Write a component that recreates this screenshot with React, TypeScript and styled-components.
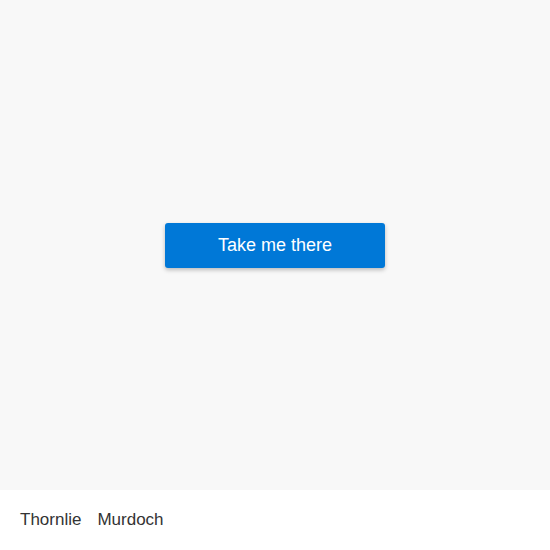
import React from 'react';
import styled, { createGlobalStyle } from 'styled-components';

const GlobalStyle = createGlobalStyle`
  html, body {
    margin: 0;
    padding: 0;
    height: 100%;
  }
  body {
    font-family: 'Liberation Sans', Arial, sans-serif;
    background: #f8f8f8;
  }
  #root {
    height: 100%;
  }
`;

const Page = styled.div`
  display: flex;
  flex-direction: column;
  height: 550px;
`;

const Main = styled.main`
  flex: 1;
  display: flex;
  align-items: center;
  justify-content: center;
  background: #f8f8f8;
`;

const GoButton = styled.button`
  width: 220px;
  height: 45px;
  border: none;
  border-radius: 3px;
  background: #0078d7;
  color: #fff;
  font-family: 'Liberation Sans', Arial, sans-serif;
  font-size: 18px;
  box-shadow: 0 2px 4px rgba(0, 0, 0, 0.25);
  cursor: pointer;
`;

const Footer = styled.footer`
  height: 60px;
  background: #fff;
  display: flex;
  align-items: center;
  gap: 16px;
  padding: 0 20px;
`;

const Stop = styled.span`
  font-size: 17px;
  color: #333;
`;

export default function App() {
  return (
    <>
      <GlobalStyle />
      <Page>
        <Main>
          <GoButton>Take me there</GoButton>
        </Main>
        <Footer>
          <Stop>Thornlie</Stop>
          <Stop>Murdoch</Stop>
        </Footer>
      </Page>
    </>
  );
}
